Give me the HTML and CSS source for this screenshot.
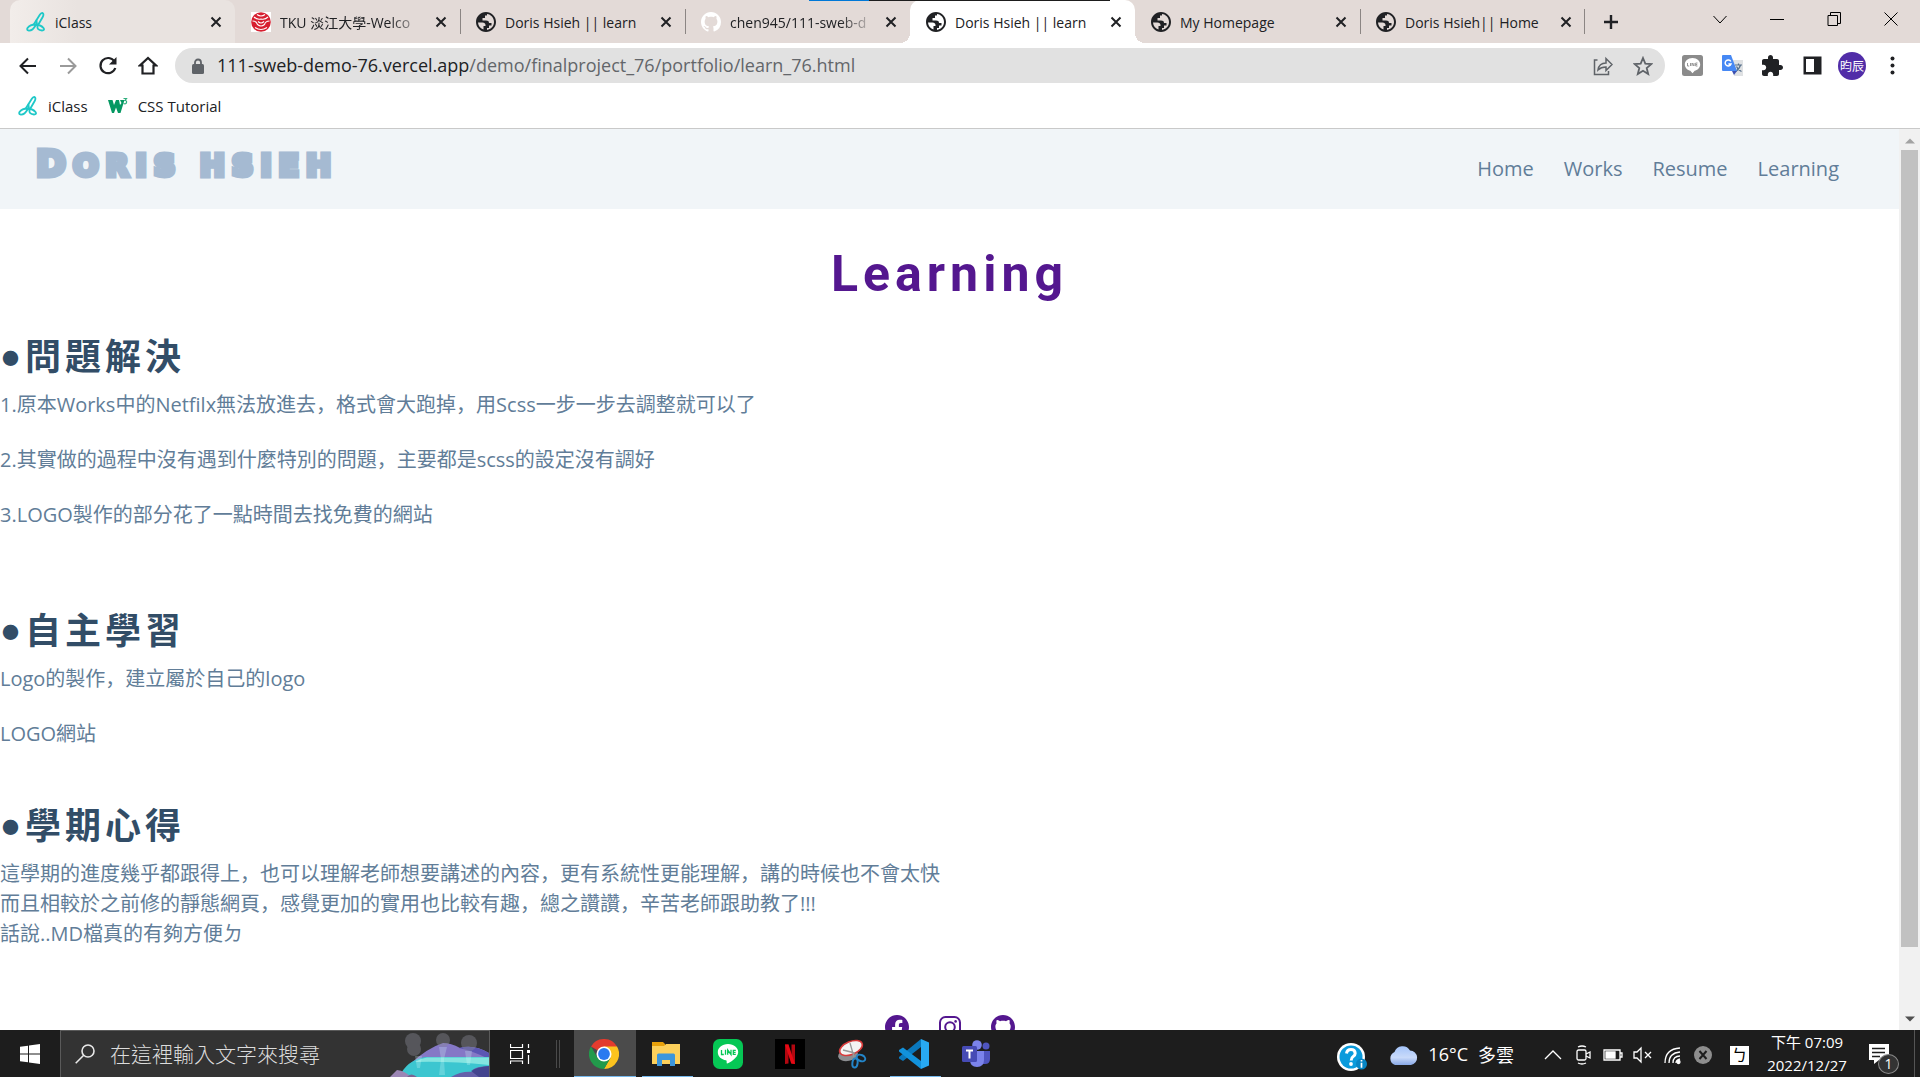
FILE: index.html
```html
<!DOCTYPE html>
<html lang="en">
<head>
<meta charset="utf-8">
<title>Doris Hsieh || learn</title>
<link rel="stylesheet" href="styles.css">
</head>
<body>
<svg class="defs" aria-hidden="true">
  <symbol id="globe" viewBox="2 2 20 20"><path fill="#202124" d="M12 2C6.480 2 2 6.480 2 12s4.480 10 10 10 10-4.480 10-10S17.520 2 12 2zM4 12.500h4.500c1.800 0 3 1 3 2.600v.9H9.500v3.500C6.500 18.600 4.200 16 4 12.500zm9 7.400v-1.900h2v-2.500h2.500v-2.500h-2.500c0-1.800-1.200-2.500-3-2.500H8.500V8H11V5.500h2V4.100c4 .5 7 3.800 7 7.900s-3 7.400-7 7.900z"/></symbol>
  <symbol id="close" viewBox="0 0 12 12"><path d="M1.500 1.500l9 9M10.500 1.500l-9 9" stroke="#202124" stroke-width="2" fill="none"/></symbol>
  <symbol id="iclass" viewBox="0 0 20 20"><g fill="none" stroke="#1fc8c8" stroke-width="1.800" stroke-linecap="round" stroke-linejoin="round"><path d="M8 12L14 2.500q2-2.500 3.200-.8q.6 1.300-.5 3.300L11.500 14q-.8 4.200 4.500 4.500q3 0 1.500-2.500Q15 13 10 12.500"/><path d="M10.500 8.500L11 13M9.500 12.500Q4 12.500 1.500 16q-1 2 1 2.500q4 .5 7-5"/></g></symbol>
  <symbol id="github" viewBox="0 0 16 16"><path d="M8 0C3.580 0 0 3.580 0 8c0 3.540 2.290 6.530 5.470 7.590.4.070.55-.17.55-.38 0-.19-.01-.82-.01-1.490-2.010.37-2.530-.49-2.690-.94-.09-.23-.48-.94-.82-1.130-.28-.15-.68-.52-.01-.53.63-.01 1.080.58 1.230.82.72 1.210 1.870.87 2.330.66.070-.52.28-.87.51-1.070-1.780-.2-3.640-.89-3.640-3.950 0-.87.31-1.590.82-2.150-.08-.2-.36-1.020.08-2.120 0 0 .67-.21 2.200.82.64-.18 1.320-.27 2-.27s1.360.09 2 .27c1.530-1.040 2.200-.82 2.200-.82.44 1.100.16 1.920.08 2.120.51.56.82 1.270.82 2.150 0 3.070-1.870 3.750-3.650 3.950.29.25.54.73.54 1.480 0 1.070-.01 1.930-.01 2.200 0 .21.15.46.55.38A8.010 8.010 0 0 0 16 8c0-4.420-3.580-8-8-8z"/></symbol>
</svg>

<header class="browser">
  <div class="window-edge"></div>
  <div class="tabstrip">
    <div class="tabs">
      <div class="tab hover"><svg class="fav"><use href="#iclass"/></svg><span class="title">iClass</span><button class="x" aria-label="關閉 iClass"><svg><use href="#close"/></svg></button></div>
      <div class="tab"><svg class="fav" viewBox="0 0 20 20"><path fill="#fff" d="M0 0h20v20H0z"/><circle cx="10" cy="10" r="9.800" fill="#d71f30"/><path d="M3 5q3 3 7 2q4 1 7-2M6 2.500q4 3 8 0M1.500 9q4 0 5 3.500q3.500 3 7 0Q14.500 9 18.500 9M7 9.500q3 3 6 0M4 15.500q6 4 12 0" fill="none" stroke="#fff" stroke-width="1.100"/></svg><span class="title fade">TKU 淡江大學-Welco</span><button class="x" aria-label="關閉 TKU"><svg><use href="#close"/></svg></button></div>
      <div class="tab sep"><svg class="fav"><use href="#globe"/></svg><span class="title">Doris Hsieh || learn</span><button class="x" aria-label="關閉分頁"><svg><use href="#close"/></svg></button></div>
      <div class="tab sep"><svg class="fav white"><use href="#github"/></svg><span class="title fade">chen945/111-sweb-d</span><button class="x" aria-label="關閉分頁"><svg><use href="#close"/></svg></button></div>
      <div class="tab active"><svg class="fav"><use href="#globe"/></svg><span class="title">Doris Hsieh || learn</span><button class="x" aria-label="關閉分頁"><svg><use href="#close"/></svg></button></div>
      <div class="tab"><svg class="fav"><use href="#globe"/></svg><span class="title">My Homepage</span><button class="x" aria-label="關閉分頁"><svg><use href="#close"/></svg></button></div>
      <div class="tab sep"><svg class="fav"><use href="#globe"/></svg><span class="title">Doris Hsieh|| Home</span><button class="x" aria-label="關閉分頁"><svg><use href="#close"/></svg></button></div>
      <button class="newtab" aria-label="新增分頁"><svg viewBox="0 0 16 16"><path d="M8 1v14M1 8h14" stroke="#202124" stroke-width="2.400"/></svg></button>
    </div>
    <div class="window-buttons">
      <button aria-label="搜尋分頁"><svg viewBox="0 0 14 14"><path d="M0.500 4l6.500 7 6.500-7"/></svg></button>
      <button aria-label="最小化"><svg viewBox="0 0 14 14"><path d="M0 7.500h14"/></svg></button>
      <button aria-label="還原"><svg viewBox="0 0 14 14"><path d="M1 3.500h9.500v10H1zM3.500 3.500v-3h10v11h-3"/></svg></button>
      <button aria-label="關閉"><svg viewBox="0 0 14 14"><path d="M0.500 0.500l13 13M13.500 0.500l-13 13"/></svg></button>
    </div>
  </div>
  <div class="toolbar">
    <button class="tool" aria-label="上一頁"><svg viewBox="0 0 20 20"><path d="M18 10H3M10 2.500L2.500 10l7.500 7.500" fill="none" stroke="#202124" stroke-width="2"/></svg></button>
    <button class="tool" aria-label="下一頁"><svg viewBox="0 0 20 20"><path d="M2 10h15M10 2.500l7.500 7.500-7.500 7.500" fill="none" stroke="#9a9a9a" stroke-width="2"/></svg></button>
    <button class="tool" aria-label="重新載入"><svg viewBox="0 0 20 20"><path d="M16.500 5.500A7.600 7.600 0 1 0 17.300 12" fill="none" stroke="#202124" stroke-width="2.200"/><path d="M18.500 1v7.500H11z" fill="#202124"/></svg></button>
    <button class="tool" aria-label="首頁"><svg viewBox="0 0 20 20"><path d="M4.500 17.500V9.500H2L10 2l8 7.500h-2.500v8z" fill="none" stroke="#202124" stroke-width="2.200"/></svg></button>
    <div class="omnibox">
      <svg class="lock" viewBox="0 0 12 16"><path d="M3 7V4.500a3 3 0 0 1 6 0V7" fill="none" stroke="#5f6368" stroke-width="1.800"/><rect y="6" width="12" height="10" rx="1.500" fill="#5f6368"/></svg>
      <span class="url">111-sweb-demo-76.vercel.app<span>/demo/finalproject_76/portfolio/learn_76.html</span></span>
      <button aria-label="分享"><svg viewBox="0 0 20 20"><path d="M4.500 4H1.500v14.500h14V15M5 14q1-7 8-7V2.500l6 6-6 6V11q-5 0-8 3z" fill="none" stroke="#5f6368" stroke-width="1.500"/></svg></button>
      <button aria-label="加入書籤"><svg viewBox="0 0 20 20"><path d="M10 2l2.300 5.600 6 .5-4.600 3.900 1.500 6L10 14.800 4.800 18l1.500-6L1.700 8.100l6-.5z" fill="none" stroke="#5f6368" stroke-width="1.800"/></svg></button>
    </div>
    <div class="extensions">
      <button aria-label="LINE"><svg viewBox="0 0 21 21"><rect width="21" height="21" rx="2.500" fill="#8b8b8b"/><path d="M10.500 3C5.800 3 2.800 6 2.800 9.500c0 3.500 3 5.600 5.500 6.300l2.200 2.400 2.200-2.400c2.500-.7 5.500-2.800 5.500-6.300C18.200 6 15.200 3 10.500 3z" fill="#fff"/><path d="M5.500 8v3h1.700M8.500 8v3M10 11V8l2 3V8M15.500 8h-1.800v3h1.800M13.700 9.500h1.500" fill="none" stroke="#8b8b8b" stroke-width=".9"/></svg></button>
      <button aria-label="翻譯"><svg viewBox="0 0 21 21"><path d="M9 5h12v16H12z" fill="#dfe1e3"/><path d="M13 10h7M16.500 8.500V10M18.500 10q-1 4-5 6.500M14.500 11.500q1 3 5 5" fill="none" stroke="#56708c" stroke-width="1.200"/><path d="M0 1q0-1 1-1h8l6 16H1q-1 0-1-1z" fill="#4688f4"/><path d="M10 16h5l-3 4z" fill="#3c50b0"/><path d="M8.800 6.500A3 3 0 1 0 9 9H6.400" fill="none" stroke="#fff" stroke-width="1.500"/></svg></button>
      <button aria-label="擴充功能"><svg viewBox="2 1 21 21"><path fill="#202124" d="M20.500 11H19V7c0-1.100-.9-2-2-2h-4V3.500C13 2.120 11.880 1 10.500 1S8 2.120 8 3.500V5H4c-1.100 0-1.990.9-1.990 2v3.800H3.500c1.490 0 2.700 1.210 2.700 2.700s-1.210 2.700-2.700 2.700H2V20c0 1.100.9 2 2 2h3.800v-1.500c0-1.490 1.210-2.700 2.700-2.700 1.490 0 2.700 1.210 2.700 2.700V22H17c1.100 0 2-.9 2-2v-4h1.500c1.380 0 2.500-1.120 2.500-2.500S21.880 11 20.500 11z"/></svg></button>
      <button aria-label="側邊面板"><svg viewBox="0 0 21 21"><path fill="#202124" fill-rule="evenodd" d="M1.500 1.500h18v18h-18zM4 4v13h8V4z"/></svg></button>
      <button class="avatar">昀辰</button>
      <button aria-label="選單"><svg viewBox="0 0 21 21"><g fill="#202124"><circle cx="10.500" cy="3.500" r="2"/><circle cx="10.500" cy="10.500" r="2"/><circle cx="10.500" cy="17.500" r="2"/></g></svg></button>
    </div>
  </div>
  <nav class="bookmarks">
    <a href="#"><svg class="fav"><use href="#iclass"/></svg>iClass</a>
    <a href="#"><svg class="fav" viewBox="0 0 20 20"><path d="M0 4h4.500L6 9l2-5h3l1 5 1.500-2L12 4h4.500L12.500 17H10L8 11.500 6 17H4z" fill="#059862"/><path d="M15.500 2.500h3l-1.500 2q2 0 1.500 2t-3 1" fill="none" stroke="#2fae7d" stroke-width="1.200"/></svg>CSS Tutorial</a>
  </nav>
</header>

<div class="viewport">
  <div class="page">
    <header class="site-header">
      <a class="logo" href="#"><span>D</span>ORIS HSIEH</a>
      <nav><a href="#">Home</a><a href="#">Works</a><a href="#">Resume</a><a href="#">Learning</a></nav>
    </header>
    <main>
      <h1>Learning</h1>
      <section class="long">
        <h2><span class="dot">●</span>問題解決</h2>
        <p>1.原本Works中的Netfilx無法放進去，格式會大跑掉，用Scss一步一步去調整就可以了</p>
        <p>2.其實做的過程中沒有遇到什麼特別的問題，主要都是scss的設定沒有調好</p>
        <p>3.LOGO製作的部分花了一點時間去找免費的網站</p>
      </section>
      <section>
        <h2><span class="dot">●</span>自主學習</h2>
        <p>Logo的製作，建立屬於自己的logo</p>
        <p><a href="#">LOGO網站</a></p>
      </section>
      <section>
        <h2><span class="dot">●</span>學期心得</h2>
        <p>這學期的進度幾乎都跟得上，也可以理解老師想要講述的內容，更有系統性更能理解，講的時候也不會太快<br>而且相較於之前修的靜態網頁，感覺更加的實用也比較有趣，總之讚讚，辛苦老師跟助教了!!!<br>話說..MD檔真的有夠方便ㄉ</p>
      </section>
    </main>
    <footer class="social">
      <a href="#" aria-label="Facebook"><svg viewBox="0 0 16 16"><path d="M16 8.049c0-4.446-3.582-8.050-8-8.050C3.580 0 0 3.603 0 8.050c0 4.017 2.926 7.347 6.750 7.951v-5.625H4.720V8.050h2.030V6.275c0-2.017 1.195-3.131 3.022-3.131.876 0 1.791.157 1.791.157v1.980h-1.009c-.993 0-1.303.621-1.303 1.258v1.510h2.218l-.354 2.326H9.250V16c3.824-.604 6.750-3.934 6.750-7.951z"/></svg></a>
      <a href="#" aria-label="Instagram"><svg viewBox="0 0 24 24"><g fill="none" stroke="#54178f" stroke-width="2"><rect x="2" y="2" width="20" height="20" rx="5.500"/><circle cx="12" cy="12" r="4.800"/></g><circle cx="17.600" cy="6.400" r="1.300"/></svg></a>
      <a href="#" aria-label="GitHub"><svg><use href="#github"/></svg></a>
    </footer>
  </div>
  <div class="scrollbar"><svg viewBox="0 0 10 6"><path d="M0 5.500L5 .5l5 5z" fill="#a3a3a3"/></svg><div class="thumb"></div><svg viewBox="0 0 10 6"><path d="M0 .5l5 5 5-5z" fill="#505050"/></svg></div>
</div>

<footer class="taskbar">
  <button class="start" aria-label="開始"><svg viewBox="0 0 20 20"><path fill="#fff" d="M0 2.800L8 1.700V9.500H0zM9 1.500L20 0v9.500H9zM0 10.500h8v7.800L0 17.200zM9 10.500h11V20L9 18.500z"/></svg></button>
  <label class="search">
    <svg class="glass" viewBox="0 0 20 20"><circle cx="13" cy="7" r="6" fill="none" stroke="#e8e8e8" stroke-width="1.600"/><path d="M8.700 11.300L.7 19.300" stroke="#e8e8e8" stroke-width="1.600"/></svg>
    <input type="text" placeholder="在這裡輸入文字來搜尋" aria-label="搜尋">
    <svg class="lagoon" viewBox="0 0 100 46">
      <path d="M20 34Q38 17 54 12q8 0 17 5q14-4 29 5v12H20z" fill="#8578c6"/>
      <path d="M70 17q14-4 30 5v6Q84 20 70 17z" fill="#5b56b4"/>
      <path d="M10 46Q18 29 36 26h64v20z" fill="#3cc6d0"/>
      <path d="M26 31q6-4 12-4.500h62V34q-40-4-74-3z" fill="#83e4e0"/>
      <g fill="#8a8c98" opacity=".4"><circle cx="24" cy="10" r="8"/><circle cx="25" cy="18" r="7"/><circle cx="54" cy="9" r="7"/><circle cx="80" cy="12" r="8"/></g>
      <g fill="#d6fafa" opacity=".25"><path d="M26 25h7l-2 12h-3zM50 16h8l-3 12 1 16h-6l2-16zM76 20h7l-2 14h-3z"/></g>
      <path d="M62 46q10-6 22-5q-2-5 16-6v11z" fill="#6560aa"/><path d="M82 40q6-4 18-5v11H90z" fill="#43448f"/><path d="M1 46l7-7q8 1 14 7z" fill="#9c86b5"/><path d="M18 46q4-5 10 0z" fill="#7b6492"/>
    </svg>
  </label>
  <button class="view" aria-label="工作檢視"><svg viewBox="0 0 20 20"><path d="M.5 0v3.500h12V0M.5 6.500h12v8H.5zM.5 20v-3h12v3M18.500 0v4M18.500 11v9" fill="none" stroke="#fff" stroke-width="1.200"/><path d="M17 6h3v3h-3z" fill="#fff"/></svg></button>
  <div class="grip"></div>
  <div class="apps">
    <button class="current" aria-label="Chrome"><svg viewBox="0 0 30 30"><path d="M15 15L2 7.500A15 15 0 0 1 28 7.500z" fill="#e33b2e"/><path d="M15 15V7.500h13A15 15 0 0 1 15 30l6.500-11.200z" fill="#fcc31e"/><path d="M2 7.500A15 15 0 0 0 15 30l6.500-11.200L15 22l-6.500-3.300z" fill="#229a4b"/><circle cx="15" cy="15" r="7.500" fill="#fff"/><circle cx="15" cy="15" r="5.900" fill="#2a7af0"/></svg></button>
    <button class="open" aria-label="檔案總管"><svg viewBox="0 0 30 30"><path d="M1 3h11l2 2v6H1z" fill="#e8a10b"/><path d="M1 7h12l2-2h14v20H1z" fill="#fcd05b"/><path d="M6 27V16q0-1.500 1.500-1.500h15Q24 14.500 24 16v11h-5v-6h-8v6z" fill="#3c96dc"/></svg></button>
    <button aria-label="LINE"><svg viewBox="0 0 30 30"><rect width="30" height="30" rx="6.500" fill="#06c755"/><path d="M15 5C9 5 4.800 8.700 4.800 13.200c0 4.400 3.700 7.300 8.200 8 1.200.2.300 3 1 3.300 1 .3 11.200-5.500 11.200-11.300C25.200 8.700 21 5 15 5z" fill="#fff"/><path d="M8.500 11v4.500h2.300M12.500 10.800v5M14.700 15.800V11l3.300 4.500v-4.700M22.800 11.400h-2.500v4h2.500M20.300 13.400h2.300" fill="none" stroke="#06c755" stroke-width="1.300"/></svg></button>
    <button aria-label="Netflix"><svg viewBox="0 0 30 30"><path d="M0 0h30v30H0z"/><path d="M10 5.500h3.500v19l-3.500.5zM16.500 5.500H20V25l-3.500-.5z" fill="#b20710"/><path d="M10 5.500h3.500L20 25l-3.800-.5z" fill="#e50914"/></svg></button>
    <button aria-label="剪取工具"><svg viewBox="0 0 30 30"><ellipse cx="11" cy="16" rx="10" ry="6" fill="#8c8e91" transform="rotate(-12 11 16)"/><ellipse cx="14" cy="9" rx="12" ry="6.500" fill="#f4f4f4" stroke="#d83a3a" stroke-width="1.600" transform="rotate(-22 14 9)"/><path d="M13 4l4 14M6 11l12 3" stroke="#999" stroke-width="1.300"/><g fill="none" stroke="#2385c9" stroke-width="2"><ellipse cx="24" cy="19" rx="4.500" ry="3" transform="rotate(25 24 19)"/><ellipse cx="18" cy="24" rx="2.600" ry="4.500" transform="rotate(8 18 24)"/></g></svg></button>
    <button class="open" aria-label="VS Code"><svg viewBox="0 0 30 30"><path d="M22 0v8L4 22 0 19.500V18z" fill="#0a78bd"/><path d="M0 11l4-2.500L22 22v8L0 12.500z" fill="#1292dc"/><path d="M22 0l8 3.500v23L22 30z" fill="#28a9f2"/></svg></button>
    <button aria-label="Teams"><svg viewBox="0 0 30 30"><circle cx="25" cy="7" r="3.500" fill="#4f55c0"/><path d="M21 12h8v8q0 5-5 5h-3z" fill="#4f55c0"/><circle cx="16" cy="6" r="4.800" fill="#7b83eb"/><path d="M9 12h14v9q0 7-7 7t-7-7z" fill="#7b83eb"/><rect x="1" y="7" width="15" height="16" rx="1.500" fill="#464bb5"/><path d="M5 11.500h7M8.500 11.500v8" stroke="#fff" stroke-width="2"/></svg></button>
  </div>
  <div class="tray">
    <svg class="help" viewBox="0 0 30 30"><circle cx="14" cy="15" r="14" fill="#fff"/><circle cx="14" cy="15" r="11.500" fill="#0b9bdc"/><path d="M9.500 11.500q.5-4 4.500-4t4.200 3.800q0 2-2 3.200t-2 4" fill="none" stroke="#fff" stroke-width="3"/><circle cx="14" cy="22" r="1.900" fill="#fff"/><circle cx="24.500" cy="22" r="5.500" fill="#0785c4"/><path d="M24.500 18v1.500M24.500 20.700v5" stroke="#fff" stroke-width="1.700"/></svg>
    <button class="weather"><svg viewBox="0 0 30 24"><defs><linearGradient id="cloud" x2="0" y2="1"><stop stop-color="#a4c4fa"/><stop offset=".6" stop-color="#c9dafa"/><stop offset="1" stop-color="#88a8e6"/></linearGradient></defs><path d="M7 23a7 7 0 0 1-.5-13A8.500 8.500 0 0 1 22 8.500 7.300 7.300 0 0 1 23 23z" fill="url(#cloud)"/></svg><span>16°C</span><span>多雲</span></button>
    <div class="status">
      <svg viewBox="0 0 20 20"><path d="M2 14l8-8 8 8"/></svg>
      <svg viewBox="0 0 20 20"><rect x="4" y="5" width="9" height="10" rx="1.500"/><path d="M13 9l4-2v6l-4-2M5 2q4-2 8 0M5 18q4 2 8 0"/></svg>
      <svg viewBox="0 0 20 20"><path d="M1 5h16v10H1zM17 8h2v4h-2"/><path d="M3 7h9v6H3z" fill="#fff"/></svg>
      <svg viewBox="0 0 20 20"><path d="M1 7h3l4-4v14l-4-4H1zM12 7l6 6M18 7l-6 6"/></svg>
      <svg viewBox="0 0 20 20"><path d="M2 18Q2 4 17 3M6 18Q6 8 17 7M10 18q0-7 7-7M13 18q0-3 4-4"/><circle cx="15.500" cy="17" r="1.500" fill="#fff"/></svg>
      <svg viewBox="0 0 20 20"><circle class="disc" cx="10" cy="10" r="9"/><path class="cross" d="M6.500 6l7 8M13.500 6l-7 8"/></svg>
    </div>
    <span class="ime">ㄅ</span>
    <div class="clock"><span>下午 07:09</span><span>2022/12/27</span></div>
    <button class="notify" aria-label="通知"><svg viewBox="0 0 22 22"><path d="M1 1h20v16H11l-5 4v-4H1z" fill="#fff"/><path d="M4 5.500h13M4 9.500h13M4 13.500h8" stroke="#1d1d1d" stroke-width="1.300"/></svg><span class="badge">1</span></button>
  </div>
</footer>
</body>
</html>
```
FILE: styles.css
```css
* { box-sizing: border-box; }
body {
  margin: 0;
  height: 100vh;
  display: flex;
  flex-direction: column;
  overflow: hidden;
  background: #fff;
  font-family: "Open Sans", "Noto Sans CJK TC", sans-serif;
}
button { border: 0; padding: 0; margin: 0; background: none; font: inherit; color: inherit; display: flex; align-items: center; justify-content: center; }
a { color: inherit; text-decoration: none; }
svg { display: block; flex: none; }
.defs { position: absolute; width: 0; height: 0; }

/* browser chrome */
.browser { flex: none; position: relative; color: #202124; font-size: 14px; border-bottom: 1px solid #c9c9c9; }
.window-edge { position: absolute; top: 0; left: 809px; width: 301px; height: 1px; background: linear-gradient(90deg, #0078d7 60px, #1d1d1d 60px); z-index: 2; }
.tabstrip { display: flex; justify-content: space-between; height: 43px; background: #e3dad7; }
.tabs { display: flex; flex: 1; min-width: 0; padding-left: 10px; }
.tab { display: flex; align-items: center; flex: 0 1 225px; min-width: 0; padding: 0 13px 0 16px; position: relative; }
.tab.hover { background: linear-gradient(90deg, #f2edea, #e9e3e0 30%); border-radius: 10px 10px 0 0; }
.tab.active { background: #fff; border-radius: 10px 10px 0 0; }
.tab.active::before, .tab.active::after { content: ""; position: absolute; bottom: 0; width: 10px; height: 10px; }
.tab.active::before { left: -10px; background: radial-gradient(circle at 0 0, transparent 10px, #fff 10px); }
.tab.active::after { right: -10px; background: radial-gradient(circle at 100% 0, transparent 10px, #fff 10px); }
.tab.sep::before { content: ""; position: absolute; left: 0; top: 9px; width: 1px; height: 25px; background: #8b8583; }
.tab.sep:has(+ .newtab)::after { content: ""; position: absolute; right: 0; top: 9px; width: 1px; height: 25px; background: #8b8583; }
.fav { width: 20px; height: 20px; }
.fav.white { fill: #fff; }
.title { flex: 1; min-width: 0; margin: 1px 9px 0 9px; white-space: nowrap; overflow: hidden; }
.title.fade { -webkit-mask-image: linear-gradient(90deg, #000 75%, transparent); mask-image: linear-gradient(90deg, #000 75%, transparent); }
.x svg { width: 12px; height: 12px; }
.newtab { width: 52px; }
.newtab svg { width: 16px; height: 16px; }
.window-buttons { display: flex; height: 37px; padding-right: 1px; }
.window-buttons button { width: 57px; }
.window-buttons svg { width: 14px; height: 14px; fill: none; stroke: #000; stroke-width: 1; }
.toolbar { display: flex; align-items: center; height: 45px; padding-left: 8px; }
.tool { width: 40px; height: 40px; }
.tool svg { width: 20px; height: 20px; }
.omnibox { flex: 1; min-width: 0; display: flex; align-items: center; gap: 20px; height: 35px; margin-left: 7px; padding: 0 12px 0 17px; border-radius: 18px; background: #e1e1e1; }
.omnibox svg { width: 20px; height: 20px; }
.omnibox .lock { width: 12px; height: 16px; }
.url { flex: 1; min-width: 0; margin-left: -7px; padding-bottom: 2px; font-size: 18px; white-space: nowrap; overflow: hidden; }
.url span { color: #63666a; }
.extensions { display: flex; align-items: center; width: 255px; padding-left: 7px; }
.extensions button { width: 40px; height: 40px; }
.extensions svg { width: 21px; height: 21px; }
.extensions .avatar { width: 28px; height: 28px; margin: 0 6px; border-radius: 50%; background: #512da8; color: #fff; font-size: 12px; }
.bookmarks { display: flex; align-items: center; gap: 20px; height: 40px; padding: 0 18px 4px; font-size: 15px; }
.bookmarks a { display: flex; align-items: center; gap: 10px; }

/* web page */
.viewport { flex: 1; min-height: 0; display: flex; overflow: hidden; }
.page { flex: 1; min-width: 0; color: #617d98; font-family: "Open Sans", "Noto Sans CJK SC", sans-serif; font-size: 20px; line-height: 30px; }
.site-header { display: flex; justify-content: space-between; align-items: center; height: 80px; padding: 0 60px 0 36px; background: #f1f5f8; }
.site-header nav { display: flex; gap: 30px; }
.logo { margin-bottom: 9px; font: 700 30px/40px "DejaVu Sans", sans-serif; letter-spacing: 7px; color: #a5bad2; -webkit-text-stroke: 5px #a5bad2; }
.logo span { font-size: 36px; }
h1, h2 { margin: 0; font-family: Roboto, "Noto Sans CJK SC", sans-serif; font-weight: 700; }
h1 { padding-top: 34px; text-align: center; font-size: 50px; line-height: 62px; letter-spacing: 5px; color: #54178f; }
h2 { display: flex; align-items: center; gap: 2px; font-size: 36px; line-height: 46px; letter-spacing: 4px; color: #324d67; }
.dot { padding-left: 2px; padding-top: 2px; font-size: 17px; line-height: 42px; }
main { display: flex; flex-direction: column; }
section { padding-top: 30px; padding-bottom: 25px; }
section.long { padding-bottom: 49px; }
p { margin: 0; padding-top: 9px; }
p + p { padding-top: 25px; }
.social { display: flex; justify-content: center; gap: 29px; padding-top: 41px; fill: #54178f; }
.social svg { width: 24px; height: 24px; }
.scrollbar { flex: none; width: 21px; display: flex; flex-direction: column; align-items: center; background: #f1f1f1; padding: 9px 0 8px; }
.scrollbar svg { width: 10px; height: 6px; }
.thumb { width: 17px; height: 797px; margin: 6px 0 auto; background: #c1c1c1; }

/* taskbar */
.taskbar { flex: none; display: flex; height: 47px; background: #1d1d1d; color: #fff; }
.start { width: 60px; }
.start svg { width: 20px; height: 20px; }
.search { display: flex; align-items: center; width: 430px; padding-left: 14px; border: 1px solid #5a5a5a; border-bottom: 0; background: #333; }
.glass { width: 20px; height: 20px; }
.search input { flex: 1; min-width: 0; margin-left: 15px; padding: 0 0 2px; border: 0; background: none; outline: 0; color: #fff; font: 300 21px/30px "Noto Sans CJK TC", sans-serif; }
.search input::placeholder { color: #dcdcdc; opacity: 1; }
.lagoon { width: 100px; height: 46px; }
.view { width: 60px; }
.view svg { width: 20px; height: 20px; }
.grip { width: 4px; height: 28px; margin: 10px 14px 0 6px; border: solid #4a4a4a; border-width: 0 1px; }
.apps { display: flex; }
.apps button { width: 62px; border-bottom: 1px solid transparent; }
.apps svg { width: 30px; height: 30px; margin: 2px 2px 0 0; }
.apps .current { background: #4b4b4b; border-color: #76b9ed; }
.apps .open { background: linear-gradient(#76b9ed, #76b9ed) bottom / 51px 1px no-repeat border-box; }
.tray { display: flex; align-items: center; margin-left: auto; margin-right: 5px; padding-right: 15px; border-right: 1px solid #555; }
.help { width: 30px; height: 30px; margin-right: 21px; margin-top: 6px; }
.weather { gap: 10px; font-size: 18px; }
.weather svg { width: 30px; height: 24px; }
.status { display: flex; gap: 10px; margin: 3px 17px 0 29px; fill: none; stroke: #fff; stroke-width: 1.3; }
.status svg { width: 20px; height: 20px; }
.status .disc { fill: #8e8e8e; stroke: none; }
.status .cross { stroke: #1d1d1d; stroke-width: 2; }
.ime { width: 19px; height: 19px; margin: 3px 14px 0 0; background: #fff; color: #000; font-size: 16px; line-height: 19px; text-align: center; }
.clock { display: flex; flex-direction: column; align-items: center; width: 88px; font-size: 15px; line-height: 23px; }
.notify { position: relative; width: 31px; height: 40px; margin-left: 17px; justify-content: flex-start; }
.notify svg { width: 22px; height: 22px; }
.badge { position: absolute; left: 10px; top: 20px; width: 21px; height: 20px; border: 1px solid #8a8a8a; border-radius: 50%; background: #333; font-size: 14px; line-height: 18px; text-align: center; }
```
